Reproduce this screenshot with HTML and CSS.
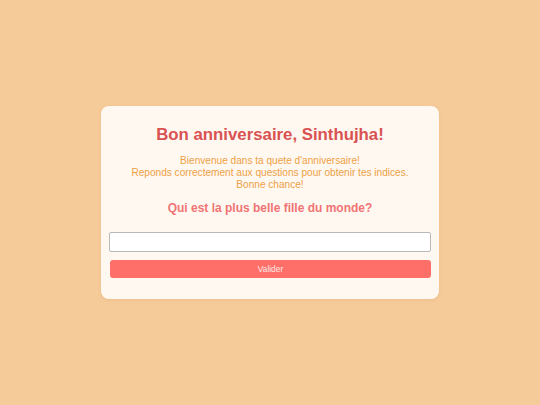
FILE: index.html
```html
<!DOCTYPE html>
<html lang="fr">
<head>
<meta charset="utf-8">
<title>Bon anniversaire</title>
<link rel="stylesheet" href="styles.css">
</head>
<body>
<main class="page">
  <section class="card">
    <h1 class="title">Bon anniversaire, Sinthujha!</h1>
    <p class="intro">Bienvenue dans ta quete d'anniversaire!<br>Reponds correctement aux questions pour obtenir tes indices.<br>Bonne chance!</p>
    <h2 class="question">Qui est la plus belle fille du monde?</h2>
    <input class="answer" type="text">
    <button class="submit" type="button">Valider</button>
  </section>
</main>
</body>
</html>
```

FILE: styles.css
```css
* { box-sizing: border-box; }
html, body {
  margin: 0;
  padding: 0;
  height: 100%;
}
body {
  background: #f6cb9a;
  font-family: "Liberation Sans", Arial, sans-serif;
}
.page {
  height: 100%;
  display: flex;
  align-items: center;
  justify-content: center;
}
.card {
  width: 338px;
  background: #fff8f1;
  border-radius: 8px;
  padding: 19px 8px 21px;
  display: flex;
  flex-direction: column;
  text-align: center;
  box-shadow: 0 1px 4px rgba(180, 120, 60, 0.15);
}
.title {
  margin: 0;
  font-size: 16.8px;
  line-height: 20px;
  font-weight: bold;
  color: #d95252;
}
.intro {
  margin: 10px 0 0;
  font-size: 10.1px;
  line-height: 12px;
  color: #eda045;
}
.question {
  margin: 9px 0 0;
  font-size: 12px;
  line-height: 16px;
  font-weight: bold;
  color: #f07474;
}
.answer {
  margin: 16px 0 0;
  height: 20px;
  width: 100%;
  border: 1px solid #b9b9b9;
  border-radius: 2px;
  background: #fff;
  padding: 0 4px;
}
.submit {
  margin: 8px 0 0 1px;
  height: 18px;
  width: calc(100% - 1px);
  border: none;
  border-radius: 3px;
  background: #ff6f69;
  color: #fde8e4;
  font-family: "Liberation Sans", Arial, sans-serif;
  font-size: 8.4px;
  padding: 0;
}
```
